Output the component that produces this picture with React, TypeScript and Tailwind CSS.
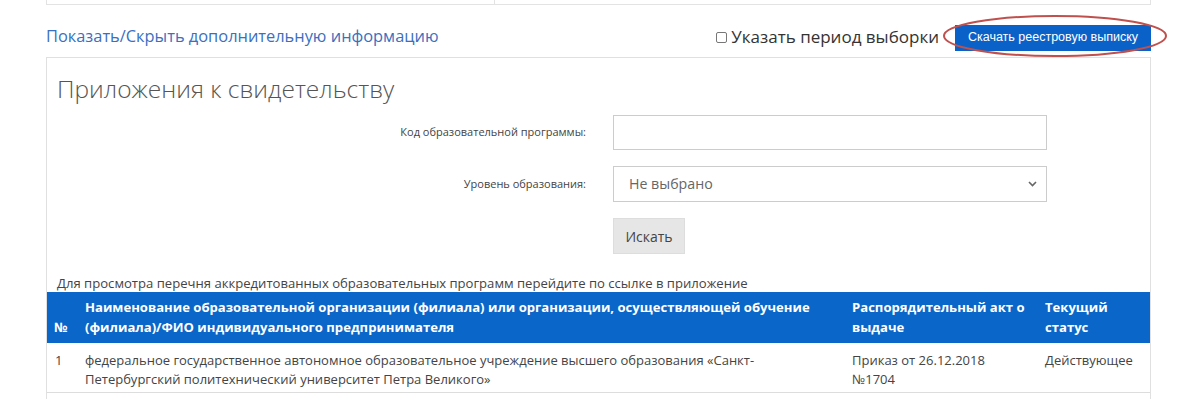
import React from "react";

const font = { fontFamily: '"Open Sans", "Liberation Sans", sans-serif' };

export default function App() {
    return (
        <div className="w-[1200px] h-[399px] overflow-hidden bg-white text-[#333]" style={font}>
            <div className="ml-[46px] w-[1105px]">
                {/* tail of the box above */}
                <div className="flex h-[5px] border-b border-l border-r border-[#e3e3e3]">
                    <div className="w-[448px] border-r border-[#e3e3e3]" />
                </div>

                {/* actions row */}
                <div className="mt-[19px] flex items-center justify-between h-[26px]">
                    <a className="text-[16.4px] text-[#3b6fc0] -mt-[2px]">
                        Показать/Скрыть дополнительную информацию
                    </a>
                    <div className="flex items-center">
                        <label className="flex items-center text-[17px] text-[#333] mr-[16px]">
                            <span className="inline-block w-[11px] h-[11px] border border-[#777] rounded-[2px] mr-[4px] mt-[1px]" />
                            Указать период выборки
                        </label>
                        <div className="relative">
                            <button
                                className="h-[26px] w-[196px] bg-[#0a62c9] text-white text-[12.5px] leading-none"
                                style={{ fontFamily: '"Liberation Sans Narrow", "Arial Narrow", "Liberation Sans", sans-serif' }}
                            >
                                Скачать реестровую выписку
                            </button>
                            {/* red annotation ring */}
                            <svg
                                className="absolute left-[-13px] top-[-9px] pointer-events-none"
                                width="226"
                                height="44"
                                viewBox="0 0 226 44"
                            >
                                <ellipse cx="113" cy="22" rx="111" ry="20" fill="none" stroke="#c0504d" strokeWidth="2" />
                            </svg>
                        </div>
                    </div>
                </div>

                {/* main panel */}
                <div className="mt-[7px] border border-[#e0e0e0] h-[400px]">
                    <h2 className="pl-[10px] pt-[15px] text-[24.5px] font-light text-[#555] leading-[32px]">
                        Приложения к свидетельству
                    </h2>

                    <div className="mt-[10px] flex flex-col gap-[16px]">
                        <div className="flex items-center">
                            <div className="w-[539px] text-right text-[11px] text-[#444]">
                                Код образовательной программы:
                            </div>
                            <input className="ml-[27px] w-[434px] h-[35px] border border-[#ccc] outline-none" />
                        </div>
                        <div className="flex items-center">
                            <div className="w-[539px] text-right text-[11px] text-[#444]">
                                Уровень образования:
                            </div>
                            <div className="ml-[27px] w-[434px] h-[36px] border border-[#ccc] flex items-center justify-between pl-[15px] pr-[9px]">
                                <span className="text-[14.2px] text-[#666]">Не выбрано</span>
                                <svg width="9" height="6" viewBox="0 0 9 6">
                                    <path d="M1 1 L4.5 4.5 L8 1" fill="none" stroke="#666" strokeWidth="1.6" />
                                </svg>
                            </div>
                        </div>
                        <div className="flex">
                            <button className="ml-[566px] w-[72px] h-[36px] bg-[#e6e6e6] border border-[#ddd] text-[14px] text-[#444]">
                                Искать
                            </button>
                        </div>
                    </div>

                    <p className="mt-[20px] pl-[10px] text-[13.1px] leading-[18px] text-[#444]">
                        Для просмотра перечня аккредитованных образовательных программ перейдите по ссылке в приложение
                    </p>

                    <table className="w-full border-collapse text-[13.1px] leading-[20px]">
                        <thead>
                            <tr className="bg-[#0a66c9] text-white font-bold text-left">
                                <th className="w-[31px] pl-[7px] pb-[6px] align-bottom">№</th>
                                <th className="w-[767px] px-[7px] pt-[5px] pb-[6px] align-bottom">
                                    Наименование образовательной организации (филиала) или организации, осуществляющей обучение
                                    <br />
                                    (филиала)/ФИО индивидуального предпринимателя
                                </th>
                                <th className="w-[193px] px-[7px] pt-[5px] pb-[6px] align-bottom">
                                    Распорядительный акт о
                                    <br />
                                    выдаче
                                </th>
                                <th className="px-[7px] pt-[5px] pb-[6px] align-bottom">
                                    Текущий
                                    <br />
                                    статус
                                </th>
                            </tr>
                        </thead>
                        <tbody>
                            <tr className="border-b border-[#ddd] text-[#444] align-top text-[13px] leading-[19px]">
                                <td className="pl-[8px] pt-[8px] pb-[3px]">1</td>
                                <td className="px-[7px] pt-[8px] pb-[3px]">
                                    федеральное государственное автономное образовательное учреждение высшего образования «Санкт-
                                    <br />
                                    Петербургский политехнический университет Петра Великого»
                                </td>
                                <td className="px-[7px] pt-[8px] pb-[3px]">
                                    Приказ от 26.12.2018
                                    <br />
                                    №1704
                                </td>
                                <td className="px-[7px] pt-[8px] pb-[3px]">Действующее</td>
                            </tr>
                        </tbody>
                    </table>
                </div>
            </div>
        </div>
    );
}
